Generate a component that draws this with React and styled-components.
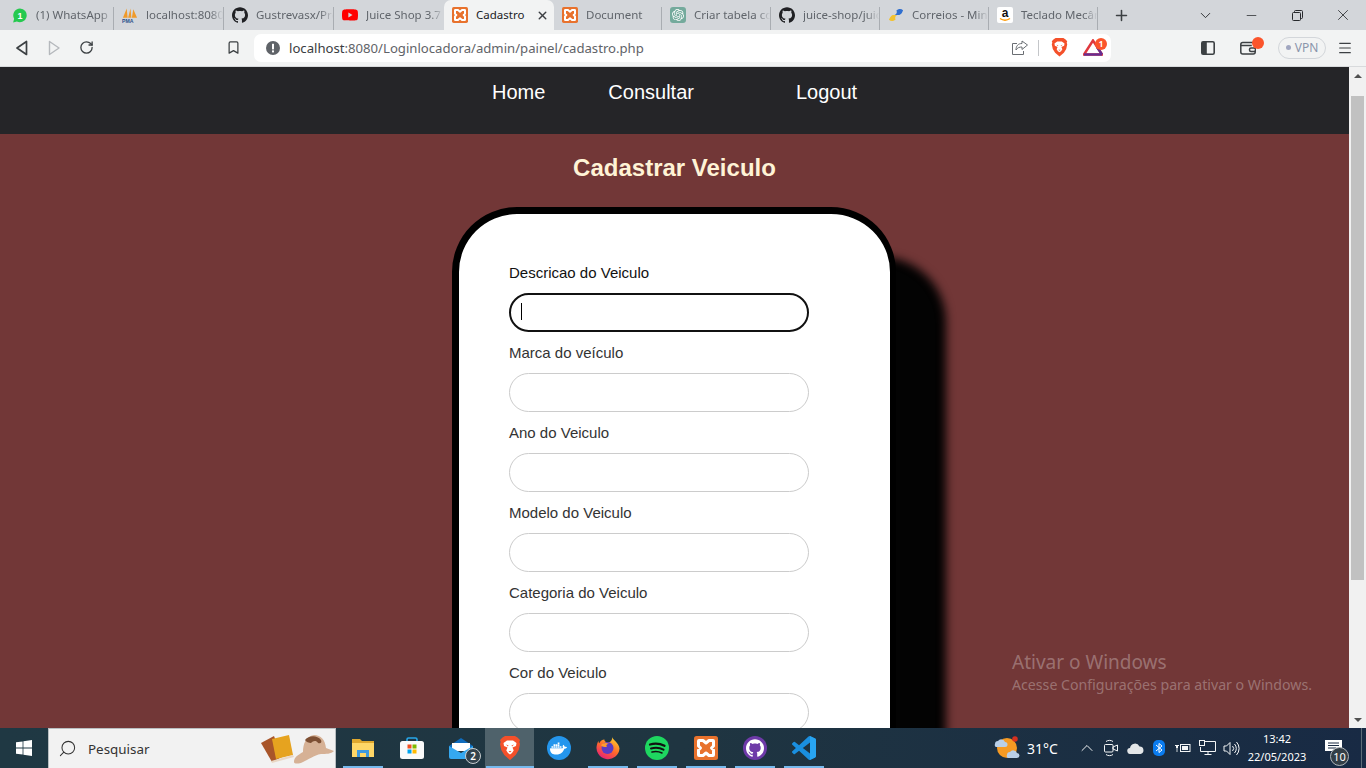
import React from "react";
import styled, { createGlobalStyle } from "styled-components";
import { SiGithub, SiYoutube, SiDocker, SiOpenai } from "react-icons/si";
import { ChevronDown, ChevronUp, Plus, Minus, X, RotateCw, Bookmark, Menu, Search } from "lucide-react";

const Global = createGlobalStyle`
  html, body { margin: 0; padding: 0; height: 100%; overflow: hidden; }
  * { box-sizing: border-box; }
  #root { height: 100vh; }
`;

const UI = `"Noto Sans", "Open Sans", sans-serif`;
const WEB = `"Liberation Sans", Arial, sans-serif`;

const Desktop = styled.div`
  width: 1366px; height: 768px; display: flex; flex-direction: column; overflow: hidden; font-family: ${UI};
`;
/* ---- browser chrome ---- */
const TabStrip = styled.div`
  height: 30px; flex: none; background: #d3d6da; display: flex; align-items: stretch; padding-left: 4px;
`;
const Tab = styled.div`
  width: ${p => p.$w || 110}px; flex: none; display: flex; align-items: center; gap: 8px; padding: 0 0 0 8px; position: relative;
  background: ${p => (p.$active ? "#f2f3f3" : "transparent")};
  border-radius: ${p => (p.$active ? "7px 7px 0 0" : "0")};
  color: ${p => (p.$active ? "#202124" : "#60656b")};
  &::after {
    content: ""; position: absolute; right: 0; top: 7px; bottom: 0; width: 1px;
    background: ${p => (p.$sep ? "#a9adb2" : "transparent")};
  }
`;
const TabIcon = styled.span`
  width: 16px; height: 16px; flex: none; display: flex; align-items: center; justify-content: center;
`;
const TabTitle = styled.span`
  flex: 1; min-width: 0; font-size: 11.5px; white-space: nowrap; overflow: hidden; line-height: 16px; padding-right: 3px;
  mask-image: ${p => (p.$active ? "none" : "linear-gradient(90deg, #000 82%, transparent 99%)")};
`;
const TabClose = styled.span`
  width: 24px; height: 16px; flex: none; margin-left: -8px; display: flex; align-items: center; justify-content: center; color: #3c3f43;
`;
const NewTab = styled.span`
  width: 32px; margin-left: 7px; display: flex; align-items: center; justify-content: center; color: #3c4043;
`;
const WindowControls = styled.div`
  margin-left: auto; display: flex; align-items: stretch;
`;
const WindowButton = styled.span`
  width: 46px; display: flex; align-items: center; justify-content: center; color: #27292c;
`;
const Toolbar = styled.div`
  height: 37px; flex: none; background: #f2f3f3; border-bottom: 1px solid #d8dadc; display: flex; align-items: center; padding: 0 5px 1px 6px;
`;
const ToolButton = styled.span`
  width: ${p => p.$w || 32}px; height: 28px; flex: none; display: flex; align-items: center; justify-content: center;
  margin-left: ${p => p.$ml || 0}px; margin-right: ${p => p.$mr || 0}px; position: relative; color: #3c4043;
`;
const Address = styled.div`
  width: 857px; height: 28px; margin-left: 5px; flex: none; background: #fff; border-radius: 7px;
  display: flex; align-items: center; padding: 0 0 0 12px;
`;
const Url = styled.span`
  font-size: 13.15px; color: #5f6368; margin-left: 9px; white-space: nowrap; flex: 1;
`;
const UrlHost = styled.span` color: #3a3d41; `;
const AddressDivider = styled.span` width: 1px; height: 16px; background: #c4c6c9; margin: 0 10px 0 8px; `;
const Dot = styled.span`
  position: absolute; border-radius: 50%; background: #fb542b; color: #fff; font-size: 8px; font-weight: 700;
  display: flex; align-items: center; justify-content: center; line-height: 1;
  width: ${p => p.$s}px; height: ${p => p.$s}px; top: ${p => p.$t}px; right: ${p => p.$r}px;
`;
const VpnPill = styled.span`
  width: 48px; height: 22px; margin-left: 6px; flex: none; border: 1px solid #d3d6da; border-radius: 11px; color: #8a94ab;
  display: flex; align-items: center; justify-content: center; gap: 4px; font-size: 12px;
  &::before { content: ""; width: 5px; height: 5px; border-radius: 50%; background: #a0a6c0; }
`;
/* ---- web page ---- */
const Viewport = styled.div` flex: 1; min-height: 0; display: flex; `;
const Page = styled.main`
  flex: 1; min-width: 0; background: #723737; overflow: hidden; position: relative; display: flex; flex-direction: column; font-family: ${WEB};
`;
const NavBar = styled.nav`
  height: 67px; flex: none; background: #252528; display: flex; padding: 14px 0 0 492px;
`;
const NavLink = styled.a`
  color: #fff; font-size: 20px; line-height: 23px; height: 23px; margin-left: ${p => p.$ml || 0}px;
`;
const Title = styled.h1`
  margin: 20px 0 25px; font-size: 24px; line-height: 28px; font-weight: 700; color: #fff3d6; text-align: center; flex: none;
`;
const Card = styled.form`
  width: 444px; flex: none; align-self: flex-start; margin-left: 452px; background: #fff; border: solid #000; border-width: 7px 6px 7px 7px; border-radius: 65px;
  box-shadow: 50px 50px 10px #030303; padding: 51px 50px 60px; display: flex; flex-direction: column; gap: 13px;
`;
const Field = styled.div` display: flex; flex-direction: column; gap: 12px; position: relative; `;
const Label = styled.label`
  font-size: 15px; line-height: 16px; color: ${p => (p.$focused ? "#111" : "#333")};
`;
const Input = styled.input`
  width: 300px; height: 39px; border-radius: 20px; background: #fff; outline: none; padding: 0 10px; font: 14px ${WEB};
  border: ${p => (p.$focused ? "2px solid #111" : "1px solid #ccc")};
`;
const Caret = styled.span`
  position: absolute; left: 12px; top: 38px; width: 1px; height: 17px; background: #000;
`;
const Watermark = styled.div`
  position: absolute; right: 37px; bottom: 33px; color: rgba(255,255,255,.3); font-family: ${UI};
`;
const WatermarkTitle = styled.div` font-size: 19px; line-height: 26px; `;
const WatermarkText = styled.div` font-size: 14.15px; line-height: 20px; `;
const Scrollbar = styled.div`
  width: 17px; flex: none; background: #f1f1f1; display: flex; flex-direction: column; align-items: center; justify-content: space-between; position: relative;
`;
const ScrollArrow = styled.span`
  width: 17px; height: 17px; flex: none; display: flex; align-items: center; justify-content: center;
  &::before {
    content: ""; border-left: 4px solid transparent; border-right: 4px solid transparent;
    ${p => (p.$down ? "border-top: 4px solid #505050;" : "border-bottom: 4px solid #505050;")}
  }
`;
const ScrollThumb = styled.span`
  width: 13px; height: 484px; background: #c1c1c1; position: absolute; top: 29px; left: 2px;
`;
/* ---- taskbar ---- */
const Taskbar = styled.footer`
  height: 40px; flex: none; background: linear-gradient(90deg, #1f3843 0%, #1f3541 50%, #182a44 100%);
  display: flex; align-items: stretch; color: #fff;
`;
const StartButton = styled.span` width: 48px; flex: none; display: flex; align-items: center; justify-content: center; `;
const SearchBox = styled.div`
  width: 288px; flex: none; background: #f2f2f2; border: 1px solid #b9bec1; border-bottom: 0; display: flex; align-items: center; padding-left: 9px; color: #333;
`;
const SearchText = styled.span` font-size: 13.4px; margin-left: 11px; flex: 1; `;
const Apps = styled.div` display: flex; margin-left: 2px; `;
const AppSlot = styled.span`
  width: 49px; position: relative; display: flex; align-items: center; justify-content: center;
  background: ${p => (p.$active ? "#4f626b" : "transparent")};
  &::after {
    content: ""; position: absolute; bottom: 0; height: 2px;
    left: ${p => (p.$active ? "1px" : "5px")}; right: ${p => (p.$active ? "0" : "4px")};
    background: ${p => (p.$open ? "#76b9ed" : "transparent")};
  }
`;
const CircleIcon = styled.span`
  width: 24px; height: 24px; border-radius: 50%; background: ${p => p.$bg}; display: flex; align-items: center; justify-content: center; color: #fff;
`;
const AppBadge = styled.span`
  position: absolute; right: 4px; bottom: 4px; width: 16px; height: 16px; border-radius: 50%; background: #33434d; border: 1px solid #c9ced1;
  font-size: 10px; font-weight: 600; display: flex; align-items: center; justify-content: center; color: #fff; line-height: 1;
`;
const Tray = styled.div` margin-left: auto; display: flex; align-items: center; `;
const Weather = styled.div` display: flex; align-items: center; gap: 7px; font-size: 14px; width: 81px; `;
const TrayIcon = styled.span` width: 24px; height: 40px; display: flex; align-items: center; justify-content: center; color: #f3f5f6; `;
const Clock = styled.div`
  width: 68px; margin-right: 6px; font-size: 11px; line-height: 18px; text-align: center; display: flex; flex-direction: column;
`;
const Notify = styled.span` width: 44px; height: 40px; position: relative; display: flex; align-items: flex-start; padding: 12px 0 0 8px; `;
const NotifyBadge = styled.span`
  position: absolute; left: 13px; top: 19px; width: 19px; height: 19px; border-radius: 50%; background: #333e47; border: 1px solid #aeb4b8;
  font-size: 11px; display: flex; align-items: center; justify-content: center; line-height: 1;
`;
const ShowDesktop = styled.span` width: 5px; height: 40px; border-left: 1px solid #5c6c78; `;

/* ---- drawn icons ---- */
const WhatsIcon = () => (
  <svg width="17" height="17" viewBox="0 0 17 17"><path d="M8.5 1a7.3 7.3 0 0 0-6.2 11L1.2 16l4-1.1A7.3 7.3 0 1 0 8.5 1z" fill="#25c94f"/><text x="8.5" y="11.8" fontSize="9.5" fontWeight="700" fill="#fff" textAnchor="middle" fontFamily="Liberation Sans">1</text></svg>
);
const PmaIcon = () => (
  <svg width="17" height="16" viewBox="0 0 17 16"><path d="M1 11 5 1l1 10zM6.5 11 9 1l1 10zM10.5 11 12 2l4 9z" fill="#f09a2a"/><text x="0" y="16" fontSize="5.5" fontWeight="700" fill="#2a4f8a" fontFamily="Liberation Sans">PMA</text></svg>
);
const XamppIcon = ({ size = 16 }) => (
  <svg width={size} height={size} viewBox="0 0 24 24"><rect width="24" height="24" rx="2.5" fill="#e8722d"/><path d="M4.500 5a.5.5 0 0 1 .5-.5h4l3 2.500 3-2.500h4a.5.5 0 0 1 .5.5v5l-2 2 2 2v5a.5.5 0 0 1-.5.5h-4L12 17l-3 2.500H5a.5.5 0 0 1-.5-.5v-5l2-2-2-2z" fill="none" stroke="#fff" strokeWidth="3" strokeLinejoin="round"/></svg>
);
const BraveIcon = ({ size = 24 }) => (
  <svg width={size} height={size * 1.1} viewBox="0 0 22 24">
    <path d="M11 0h5l2.500 1.500L21 4l-.7 2 .7 2-1.300 6-3 5L11 24l-5.700-5-3-5L1 8l.7-2L1 4l2.500-2.500L6 0z" fill="#f4502a"/>
    <path d="M4.500 7 8 4.500h6L17.500 7 17 10l-3.500 1.500 1.200 3L13 17l-2 1.500L9 17l-1.700-2.500 1.200-3L5 10z" fill="#fff"/>
    <path d="M7 8.500l2.500.8-.6 1zM15 8.500l-2.500.8.6 1z" fill="#f4502a"/>
    <path d="M9.500 15h3L11 16.500z" fill="#f4502a"/>
  </svg>
);
const ChatBox = styled.span`
  width: 16px; height: 16px; border-radius: 3px; background: #74aa9c; color: #fff; display: flex; align-items: center; justify-content: center;
`;
const SnakeIcon = () => (
  <svg width="17" height="16" viewBox="0 0 17 16"><path d="M9 3c3-2 5-2 7 0-1 2-1 4-4 5L7 8c2-1 3-2 2-5z" fill="#2f6fd0"/><path d="M8 13c-3 2-5 2-7 0 1-2 2-4 4-5l5 0c-2 1-3 2-2 5z" fill="#f2c230"/></svg>
);
const AmazonIcon = () => (
  <svg width="16" height="16" viewBox="0 0 16 16"><rect width="16" height="16" rx="2" fill="#fff"/><text x="8" y="10" fontSize="12" fontWeight="700" fill="#111" textAnchor="middle" fontFamily="Liberation Sans">a</text><path d="M3 11.5c3 2 7 2 10 0" stroke="#f90" strokeWidth="1.4" fill="none"/></svg>
);
const BackIcon = () => (
  <svg width="14" height="16" viewBox="0 0 14 16" fill="none" stroke="#3c4043" strokeWidth="1.7" strokeLinejoin="round"><path d="M11.5 1.5v13L2 8z"/></svg>
);
const ForwardIcon = () => (
  <svg width="14" height="16" viewBox="0 0 14 16" fill="none" stroke="#b5b8bc" strokeWidth="1.4" strokeLinejoin="round"><path d="M2.5 1.5v13L12 8z"/></svg>
);
const WarnIcon = () => (
  <svg width="14" height="14" viewBox="0 0 14 14"><circle cx="7" cy="7" r="7" fill="#5f6368"/><rect x="6" y="2.8" width="2" height="5.6" fill="#fff"/><rect x="6" y="9.4" width="2" height="2" fill="#fff"/></svg>
);
const ShareIcon = () => (
  <svg width="16" height="15" viewBox="0 0 16 15" fill="none" stroke="#6a6e73" strokeWidth="1"><path d="M5 3.500H.5v11h11V11"/><path d="M10 1v2.500C6 3.500 4 6 4 10c1.500-2.500 3.500-3 6-3v2.500L15.500 5z" strokeLinejoin="round"/></svg>
);
const BatIcon = () => (
  <svg width="20" height="17" viewBox="0 0 20 17"><path d="M10 1.500 1 15.500h18z" fill="none" stroke="#e0383e" strokeWidth="2.400"/><path d="M1 15.500h18" stroke="#662d91" strokeWidth="2.400"/><path d="M14 8l5 7.500" stroke="#662d91" strokeWidth="2.400"/></svg>
);
const SideIcon = () => (
  <svg width="14" height="14" viewBox="0 0 14 14"><rect x=".8" y=".8" width="12.400" height="12.400" rx="1.500" fill="none" stroke="#3c4043" strokeWidth="1.600"/><rect x=".8" y=".8" width="5" height="12.400" fill="#3c4043"/></svg>
);
const WalletIcon = () => (
  <svg width="16" height="14" viewBox="0 0 16 14" fill="none" stroke="#3c4043" strokeWidth="1.500"><rect x=".8" y="1.500" width="14.400" height="11.500" rx="2"/><path d="M.8 4.500h11"/><rect x="9.500" y="7" width="6" height="3.500" rx="1.500" fill="#f2f3f3"/></svg>
);
const RestoreIcon = () => (
  <svg width="11" height="11" viewBox="0 0 11 11" fill="none" stroke="#27292c"><rect x=".5" y="2.500" width="8" height="8" rx="1"/><path d="M2.500 2.500v-1a1 1 0 0 1 1-1h6a1 1 0 0 1 1 1v6a1 1 0 0 1-1 1h-1"/></svg>
);
const WinLogo = () => (
  <svg width="16" height="16" viewBox="0 0 16 16" fill="#fff"><path d="M0 2.300 6.600 1.400v6.200H0zM7.400 1.300 16 0v7.600H7.400zM0 8.400h6.600v6.200L0 13.700zM7.400 8.400H16V16l-8.600-1.300z"/></svg>
);
const SearchArt = () => (
  <svg width="74" height="30" viewBox="0 0 74 30">
    <path d="M0 9 13 2l8 21-10 5z" fill="#a8552a"/>
    <path d="M11 5 28 1l4 20-17 4z" fill="#e6a31f"/>
    <path d="M10 27l22-6 1 2-22 6z" fill="#e9d7c4"/>
    <path d="M33 28c0-5 4-7 9-10 0-8 3-16 11-17 7 0 11 5 12 13l8 3c-3 3-8 3-13 3-7 1-13 6-18 8-4 2-9 2-9 0z" fill="#d6b195"/>
    <path d="M44 6c4-5 12-5 16 0 1 2 0 4-3 3-2-3-5-2-7 0-2 0-5-1-6-3z" fill="#7d4f33"/>
  </svg>
);
const FolderIcon = () => (
  <svg width="22" height="20" viewBox="0 0 22 20"><path d="M0 1h8l2 2h12v3H0z" fill="#e0a82e"/><rect y="5" width="22" height="14" fill="#ffd767"/><path d="M5 19v-7h12v7h-3v-4H8v4z" fill="#3f9ae0"/></svg>
);
const StoreIcon = () => (
  <svg width="24" height="24" viewBox="0 0 24 24"><path d="M7 6V3.500A1.500 1.500 0 0 1 8.500 2h7A1.500 1.500 0 0 1 17 3.500V6" fill="none" stroke="#28a8ea" strokeWidth="1.600"/><rect y="5" width="24" height="18" rx="2.500" fill="#fafafa"/><rect x="7.500" y="8.500" width="4" height="4" fill="#f25022"/><rect x="12.500" y="8.500" width="4" height="4" fill="#7fba00"/><rect x="7.500" y="13.500" width="4" height="4" fill="#00a4ef"/><rect x="12.500" y="13.500" width="4" height="4" fill="#ffb900"/></svg>
);
const MailIcon = () => (
  <svg width="24" height="22" viewBox="0 0 24 22"><path d="M0 9 12 1l12 8v2H0z" fill="#0f6cbd"/><path d="M3 6h18v8H3z" fill="#fff"/><path d="M0 9v11a2 2 0 0 0 2 2h20a2 2 0 0 0 2-2V9l-12 7z" fill="#35a8f0"/></svg>
);
const FirefoxIcon = () => (
  <svg width="24" height="24" viewBox="0 0 24 24">
    <defs>
      <linearGradient id="ffA" x1="0.800" y1="0" x2="0.200" y2="1"><stop offset="0" stopColor="#ffd32e"/><stop offset=".5" stopColor="#ff6a2b"/><stop offset="1" stopColor="#e5197e"/></linearGradient>
    </defs>
    <path d="M16 1c1 3 7 6 7.500 11.500A11.500 11.500 0 1 1 1 8.500c.3-1.600 1-3 1.500-3.600 0 1 .3 2 .8 2.400C4 4.800 6.500 3.500 8.500 3.500 8 5 9.500 6 11 6.500 14 6.500 16.500 5 16 1z" fill="url(#ffA)"/>
    <circle cx="11.500" cy="12" r="6" fill="#5b3bc4"/><path d="M5 9c2-2 5-3 8-1-3 0-3 2-2 3-3 0-5 0-6-2z" fill="#ff9b2f"/>
  </svg>
);
const SpotifyIcon = () => (
  <svg width="24" height="24" viewBox="0 0 24 24"><circle cx="12" cy="12" r="12" fill="#1ed760"/><g fill="none" stroke="#111" strokeLinecap="round"><path d="M5 8.500c5-1.400 10-1 14.500 1.300" strokeWidth="2.300"/><path d="M6 12.500c4-1 9-.7 12.500 1.200" strokeWidth="2"/><path d="M7 16c3.500-.8 7-.5 10 1" strokeWidth="1.600"/></g></svg>
);
const CodeIcon = () => (
  <svg width="24" height="24" viewBox="0 0 24 24">
    <path d="M23.150 2.587 18.210.21a1.494 1.494 0 0 0-1.705.29l-9.460 8.630-4.120-3.128a.999.999 0 0 0-1.276.057L.327 7.261A1 1 0 0 0 .326 8.740L3.899 12 .326 15.260a1 1 0 0 0 .001 1.479L1.650 17.940a.999.999 0 0 0 1.276.057l4.120-3.128 9.460 8.630a1.492 1.492 0 0 0 1.704.29l4.942-2.377A1.500 1.500 0 0 0 24 20.060V3.939a1.500 1.500 0 0 0-.85-1.352zm-5.146 14.861L10.826 12l7.178-5.448v10.896z" fill="#1a8fe0"/>
    <path d="M18 .1 23.150 2.587A1.500 1.500 0 0 1 24 3.939V20.060a1.500 1.500 0 0 1-.85 1.352L18 23.900z" fill="#28a5f2"/>
  </svg>
);
const WeatherIcon = () => (
  <svg width="26" height="26" viewBox="0 0 26 26"><circle cx="13" cy="13" r="10" fill="#f59a23"/><circle cx="21" cy="4" r="2.800" fill="#d5301f"/><path d="M1 9a3 3 0 0 1 3-3 4 4 0 0 1 7 1 2.500 2.500 0 0 1 0 5H3a2 2 0 0 1-2-3z" fill="#b9cfe8"/><path d="M13 20a3 3 0 0 1 3-3 4 4 0 0 1 7 1 2.500 2.500 0 0 1 0 5h-8a2 2 0 0 1-2-3z" fill="#b9cfe8"/></svg>
);
const MeetIcon = () => (
  <svg width="16" height="18" viewBox="0 0 16 18" fill="none" stroke="#f3f5f6"><rect x="1.500" y="5.500" width="8.500" height="7.500" rx="1"/><path d="M10 8l4.500-2v6L10 10zM3 2.500c2-1.500 5-1.500 7 0M3 15.500c2 1.500 5 1.500 7 0"/></svg>
);
const CloudIcon = () => (
  <svg width="17" height="11" viewBox="0 0 17 11" fill="#e3e6e8"><path d="M3.500 11a3 3 0 0 1-.5-6 5 5 0 0 1 9.500-1.500A3.800 3.800 0 0 1 13.500 11z"/></svg>
);
const BluetoothIcon = () => (
  <svg width="12" height="16" viewBox="0 0 12 16"><rect width="12" height="16" rx="5" fill="#0a7cf0"/><path d="M3 5l6 5-3 2.500v-9L9 6l-6 5" fill="none" stroke="#fff"/></svg>
);
const BatteryIcon = () => (
  <svg width="16" height="12" viewBox="0 0 16 12" fill="#f3f5f6"><path d="M0 3h4v1H3v2H1V4H0z"/><rect x="1.600" y="6" width=".8" height="4"/><rect x="5.500" y="2.500" width="9.500" height="7" fill="none" stroke="#f3f5f6"/><rect x="7" y="4" width="6" height="4"/></svg>
);
const NetworkIcon = () => (
  <svg width="17" height="16" viewBox="0 0 17 16" fill="none" stroke="#f3f5f6"><path d="M6 1.500h10.500v10H1.500V7"/><path d="M9 11.500v3M5.500 14.500h7"/><rect x=".5" y=".5" width="5" height="5"/></svg>
);
const VolumeIcon = () => (
  <svg width="17" height="15" viewBox="0 0 17 15" fill="none" stroke="#f3f5f6"><path d="M1 5h2.500L7 1.500v12L3.500 10H1z"/><path d="M9.500 5a3.500 3.500 0 0 1 0 5M11.500 3a6.500 6.500 0 0 1 0 9M13.500 1a9.500 9.500 0 0 1 0 13"/></svg>
);
const NotifyIcon = () => (
  <svg width="17" height="14" viewBox="0 0 17 14" fill="#fff"><path d="M0 0h17v11h-6l-3 3v-3H0z"/><path d="M3 3h11M3 5.500h11M3 8h8" stroke="#1c2d44"/></svg>
);

const TABS = [
  { title: "(1) WhatsApp", icon: <WhatsIcon />, sep: true },
  { title: "localhost:8080 / lo", icon: <PmaIcon />, sep: true },
  { title: "Gustrevasx/Projeto", icon: <SiGithub size={16} color="#202124" />, sep: true },
  { title: "Juice Shop 3.7 - lab", icon: <SiYoutube size={16} color="#f00" /> },
  { title: "Cadastro", icon: <XamppIcon />, active: true, close: true },
  { title: "Document", icon: <XamppIcon />, sep: true, w: 108 },
  { title: "Criar tabela com", icon: <ChatBox><SiOpenai size={12} /></ChatBox>, sep: true, w: 109 },
  { title: "juice-shop/juice-s", icon: <SiGithub size={16} color="#202124" />, sep: true, w: 109 },
  { title: "Correios - Minhas", icon: <SnakeIcon />, sep: true, w: 109 },
  { title: "Teclado Mecânico", icon: <AmazonIcon />, sep: true, w: 109 },
];

const FIELDS = ["Descricao do Veiculo", "Marca do veículo", "Ano do Veiculo", "Modelo do Veiculo", "Categoria do Veiculo", "Cor do Veiculo", "Placa do Veiculo"];

const APPS = [
  { key: "files", icon: <FolderIcon />, open: true },
  { key: "store", icon: <StoreIcon /> },
  { key: "mail", icon: <MailIcon />, badge: "2" },
  { key: "brave", icon: <BraveIcon size={22} />, open: true, active: true },
  { key: "docker", icon: <CircleIcon $bg="#2496ed"><SiDocker size={17} /></CircleIcon> },
  { key: "firefox", icon: <FirefoxIcon />, open: true },
  { key: "spotify", icon: <SpotifyIcon />, open: true },
  { key: "xampp", icon: <XamppIcon size={24} />, open: true },
  { key: "github", icon: <CircleIcon $bg="#6e3aa8"><SiGithub size={18} /></CircleIcon>, open: true },
  { key: "vscode", icon: <CodeIcon />, open: true },
];

export default function App() {
  return (
    <Desktop>
      <Global />
      <TabStrip>
        {TABS.map(t => (
          <Tab key={t.title} $active={t.active} $sep={t.sep} $w={t.w}>
            <TabIcon>{t.icon}</TabIcon>
            <TabTitle $active={t.active}>{t.title}</TabTitle>
            {t.close && <TabClose><X size={13} strokeWidth={2.6} /></TabClose>}
          </Tab>
        ))}
        <NewTab><Plus size={17} strokeWidth={2.2} /></NewTab>
        <WindowControls>
          <WindowButton><ChevronDown size={17} strokeWidth={1.3} /></WindowButton>
          <WindowButton><Minus size={15} strokeWidth={1.2} /></WindowButton>
          <WindowButton><RestoreIcon /></WindowButton>
          <WindowButton><X size={18} strokeWidth={1.1} /></WindowButton>
        </WindowControls>
      </TabStrip>
      <Toolbar>
        <ToolButton><BackIcon /></ToolButton>
        <ToolButton><ForwardIcon /></ToolButton>
        <ToolButton><RotateCw size={15} strokeWidth={2.1} /></ToolButton>
        <ToolButton $ml={115}><Bookmark size={15} strokeWidth={2} /></ToolButton>
        <Address>
          <WarnIcon />
          <Url><UrlHost>localhost</UrlHost>:8080/Loginlocadora/admin/painel/cadastro.php</Url>
          <ToolButton $w={20}><ShareIcon /></ToolButton>
          <AddressDivider />
          <ToolButton $w={20} $mr={6}><BraveIcon size={17} /></ToolButton>
          <ToolButton $w={36}>
            <BatIcon />
            <Dot $s={12} $t={4} $r={4}>1</Dot>
          </ToolButton>
        </Address>
        <ToolButton $ml={81}><SideIcon /></ToolButton>
        <ToolButton $w={48}>
          <WalletIcon />
          <Dot $s={12} $t={3} $r={8} />
        </ToolButton>
        <VpnPill>VPN</VpnPill>
        <ToolButton $w={38}><Menu size={16} strokeWidth={1.7} /></ToolButton>
      </Toolbar>
      <Viewport>
        <Page>
          <NavBar>
            <NavLink>Home</NavLink>
            <NavLink $ml={63}>Consultar</NavLink>
            <NavLink $ml={102}>Logout</NavLink>
          </NavBar>
          <Title>Cadastrar Veiculo</Title>
          <Card>
            {FIELDS.map((f, i) => (
              <Field key={f}>
                <Label $focused={i === 0}>{f}</Label>
                <Input $focused={i === 0} />
                {i === 0 && <Caret />}
              </Field>
            ))}
          </Card>
          <Watermark>
            <WatermarkTitle>Ativar o Windows</WatermarkTitle>
            <WatermarkText>Acesse Configurações para ativar o Windows.</WatermarkText>
          </Watermark>
        </Page>
        <Scrollbar>
          <ScrollArrow />
          <ScrollThumb />
          <ScrollArrow $down />
        </Scrollbar>
      </Viewport>
      <Taskbar>
        <StartButton><WinLogo /></StartButton>
        <SearchBox>
          <Search size={19} strokeWidth={1.3} style={{ transform: "scaleX(-1)" }} />
          <SearchText>Pesquisar</SearchText>
          <SearchArt />
        </SearchBox>
        <Apps>
          {APPS.map(a => (
            <AppSlot key={a.key} $open={a.open} $active={a.active}>
              {a.icon}
              {a.badge && <AppBadge>{a.badge}</AppBadge>}
            </AppSlot>
          ))}
        </Apps>
        <Tray>
          <Weather><WeatherIcon /><span>31°C</span></Weather>
          <TrayIcon><ChevronUp size={20} strokeWidth={1.2} /></TrayIcon>
          <TrayIcon><MeetIcon /></TrayIcon>
          <TrayIcon><CloudIcon /></TrayIcon>
          <TrayIcon><BluetoothIcon /></TrayIcon>
          <TrayIcon><BatteryIcon /></TrayIcon>
          <TrayIcon><NetworkIcon /></TrayIcon>
          <TrayIcon><VolumeIcon /></TrayIcon>
          <Clock><span>13:42</span><span>22/05/2023</span></Clock>
          <Notify>
            <NotifyIcon />
            <NotifyBadge>10</NotifyBadge>
          </Notify>
          <ShowDesktop />
        </Tray>
      </Taskbar>
    </Desktop>
  );
}
